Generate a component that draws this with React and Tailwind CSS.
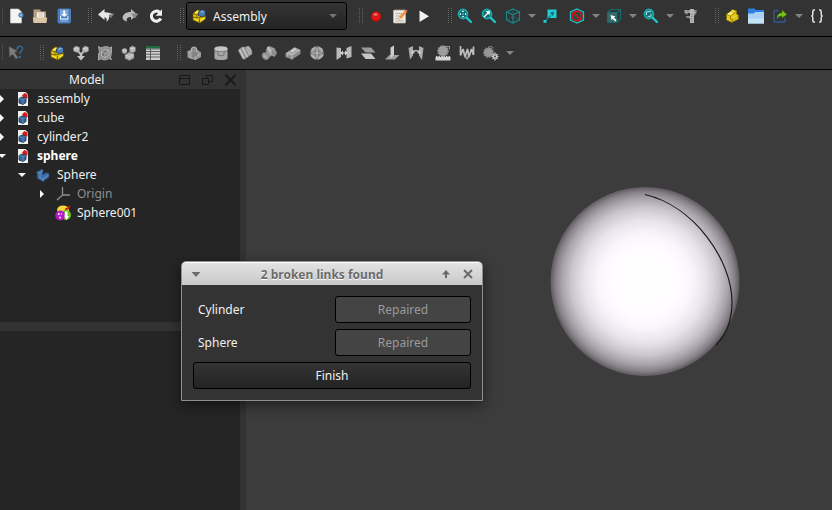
import React from "react";

function Icon({ children, className = "size-4" }) {
  return (
    <svg viewBox="0 0 16 16" className={`${className} shrink-0`} fill="none" aria-hidden="true">
      {children}
    </svg>
  );
}

/* ---------- file and edit icons ---------- */

const NewFile = () => (
  <Icon>
    <path d="M2.500 1h8l3 3v11h-11z" fill="#f4f4f2" stroke="#d8d8d4" strokeWidth=".6" />
    <circle cx="13" cy="7" r="2.600" fill="#4d7fb8" />
    <circle cx="13" cy="7" r="1.100" fill="#a8c6e4" />
  </Icon>
);
const OpenFile = () => (
  <Icon>
    <path d="M1.500 1.500h7v2h5.500v10h-12.500z" fill="#b89f7d" />
    <path d="M4.500 4h8v7h-8z" fill="#f5f2ec" stroke="#9c8869" strokeWidth=".5" />
    <path d="M6.500 6h4.500M6.500 8h4.500" stroke="#b9b0a2" strokeWidth=".8" />
    <path d="M.8 9.500h14.400l-.7 5.500h-13z" fill="#dac6a6" />
  </Icon>
);
const SaveFile = () => (
  <Icon>
    <rect x="2" y="1" width="12.500" height="14" rx="1" fill="#3f78c0" stroke="#5b8cca" strokeWidth=".8" />
    <path d="M4 1.500h8.500v7H4z" fill="#7ba5d8" />
    <path d="M7.200 2.500h2v3.500h2L8.200 9 5.200 6h2z" fill="#fff" />
    <path d="M4 10h8.500v4H4z" fill="#6f9cd2" />
    <path d="M4.500 8v3h7.500V8" stroke="#e9f1fa" strokeWidth="1" />
  </Icon>
);
const Undo = () => (
  <Icon>
    <path d="M9 5.500h7.500l-3.700 5z" fill="#77736f" />
    <path d="M0 6.500 6.500 1v3.200c4.500 0 7 1 8 2.300H11c.6 2.500.2 5-2.500 7.500.8-2.700 0-4.500-2-4.700V12z" fill="#e6e6e6" />
  </Icon>
);
const Redo = () => (
  <Icon>
    <path d="M15 6.500 9 1v3C4 4 1 6 .5 10c.6 1.700 2 3 4.500 3.500C4 10.500 5.500 9 9 9v3z" fill="#bdbdbd" />
    <path d="M9 5.500h7.500l-3.700 5z" fill="#8b8783" />
  </Icon>
);
const Reload = () => (
  <Icon>
    <path d="M12.800 10.500A5 5 0 1 1 11.500 4.200" stroke="#f0f0f0" strokeWidth="3" />
    <path d="M14 1.200v6.600H7.500z" fill="#f0f0f0" />
  </Icon>
);
const AssemblyPart = () => (
  <Icon>
    <path d="M2 5.500 6 2l4 .5v4l4.500 1v3.500L9 15l-7-3z" fill="#e3c414" stroke="#6b5b04" strokeWidth=".8" />
    <path d="M2 5.500 6 7l4-4M6 7v3l8-2M6 10l-4-1M8.500 14.500V10.500" stroke="#6b5b04" strokeWidth=".9" />
    <path d="m3.500 4.700 2.800-2 2 .4-2.500 2.300z" fill="#fbe95a" />
    <path d="M3 10.500 7 12v1.500l-4-2zM9.500 12l4-2.500v1.200l-4 2.500z" fill="#f7e23c" />
    <path d="m7.500 4 3.500-2.500L14.500 3v4.500L11 9 7.500 7.500z" fill="#4a7ab2" stroke="#1d3556" strokeWidth=".8" />
    <path d="M8.700 4.200 11.200 2.600 13.500 3.500 11 5z" fill="#7ea7d6" />
  </Icon>
);
const Record = () => (
  <Icon>
    <circle cx="8" cy="8.500" r="5" fill="#dc1515" stroke="#8a0d0d" strokeWidth=".6" />
    <ellipse cx="7.500" cy="6.500" rx="2.200" ry="1.300" fill="#f47474" />
  </Icon>
);
const MacroEdit = () => (
  <Icon>
    <rect x="1.500" y="2" width="12" height="13" rx=".8" fill="#ece9e2" stroke="#bcb8af" strokeWidth=".8" />
    <path d="M2 1.500h11.500" stroke="#57534e" strokeWidth="1.600" strokeDasharray="1 1" />
    <path d="M3.500 5.500h7M3.500 8h5M3.500 10.500h4M3.500 12.800h8" stroke="#aaa69d" strokeWidth=".8" />
    <path d="m7 9 6-6.500 2 1.500-5.700 6.500-2.800 1.500z" fill="#f0923c" />
    <path d="m13 2.500 1-1 1.700 1.300-.7 1.200z" fill="#e45d5d" />
    <path d="m7 9-.5 3L9.300 10.700z" fill="#f1d6a8" />
  </Icon>
);
const Play = () => (
  <Icon>
    <path d="m3.500 2.500 9.500 5.700-9.500 5.800z" fill="#f2f2f2" />
  </Icon>
);

/* ---------- view icons ---------- */

const Magnifier = ({ children }) => (
  <Icon>
    <circle cx="6" cy="6" r="4.500" fill="#11686b" stroke="#1aa7ab" strokeWidth="1.800" />
    <path d="m9.800 9.800 4.200 4.200" stroke="#1fc4c8" strokeWidth="2.400" strokeLinecap="round" />
    {children}
  </Icon>
);
const FitAll = () => (
  <Magnifier>
    <path d="M6 2.500 7.300 4H4.700zM6 9.500 7.300 8H4.700zM2.500 6 4 4.700v2.600zM9.500 6 8 4.700v2.600z" fill="#fff" />
    <circle cx="6" cy="6" r=".7" fill="#bfeeee" />
  </Magnifier>
);
const FitSelection = () => (
  <Magnifier>
    <path d="m3 9 4-4" stroke="#fff" strokeWidth="1.200" />
    <path d="M4.700 3.200 9 2.800l-.4 4.500z" fill="#fff" />
  </Magnifier>
);
const ZoomDraw = () => (
  <Magnifier>
    <path d="M3.500 7V4l4.500-.5M4.500 8.300H8V5.500" stroke="#a9ecec" strokeWidth="1" />
  </Magnifier>
);
const WireCube = () => (
  <Icon>
    <path d="m8 1 6.500 2.800v8L8 15l-6.500-3.200v-8zM1.500 3.800 8 6.800l6.500-3M8 6.800V15" stroke="#15888b" strokeWidth="1.200" />
    <path d="M8 1v7M1.500 11.800 8 8.500l6.500 3.300" stroke="#15888b" strokeWidth=".8" strokeDasharray="1.500 1" />
  </Icon>
);
const GoLinked = () => (
  <Icon>
    <path d="M5.500 1.500h9v8.500H5.500z" fill="#20cdd2" />
    <path d="m3 13 6-5.500" stroke="#0f7f82" strokeWidth="1.200" />
    <path d="M8 4.700 12 3.800 11 8z" fill="#0b6467" />
    <path d="M1.500 12h3v2.800h-3z" fill="#20cdd2" />
  </Icon>
);
const NoDraw = () => (
  <Icon>
    <path d="m8 1 6.500 3v8L8 15l-6.500-3V4z" fill="#0c5457" stroke="#1ec3c8" strokeWidth="1.300" />
    <circle cx="8" cy="8" r="4.800" stroke="#d01414" strokeWidth="1.900" />
    <path d="m4.700 4.700 6.600 6.600" stroke="#d01414" strokeWidth="2" />
  </Icon>
);
const SelectCube = () => (
  <Icon>
    <path d="M1.500 4.500h9.500v10H1.500z" fill="#35696a" />
    <path d="M1.500 4.500 5 1.500h9.500v9.500L11 14.500H1.500zM1.500 4.500H11v10M11 4.500l3.500-3" stroke="#156b6d" strokeWidth="1.200" />
    <path d="m4.500 7 5 1.600-1.600 1 2.600 2.600-1.200 1.200-2.700-2.700-1 1.500z" fill="#fff" />
  </Icon>
);
const Caliper = () => (
  <Icon>
    <path d="M1.500 2h12v3h-12z" fill="#a2a5a1" />
    <path d="M7 1h4v14H7z" fill="#b3b6b1" />
    <path d="M1.500 5h3v2zM3 8h4v2.500L3 9.500zM11 5h2.500l-2.500 3z" fill="#8d918c" />
    <path d="M9 6v8" stroke="#666" strokeWidth=".8" strokeDasharray="1 1" />
    <path d="M5 2v2M12 2v2" stroke="#666966" strokeWidth=".8" />
  </Icon>
);
const YellowPart = () => (
  <Icon>
    <path d="M2.500 6 6 4l2-2.500 4.500 1.300V6l2 1.500V11L8 14.500 2.500 12z" fill="#e7c914" stroke="#82700a" strokeWidth=".7" />
    <path d="m2.500 6 4 2v3l2 1v2M6.500 8l6-4.500M8.500 11.500 14 8" stroke="#8a760b" strokeWidth=".9" />
    <path d="m3.800 6 3-2 2 1L6.300 7zM8 2.500l3.300 1M9 10.500l4-2.500" stroke="#fff27a" strokeWidth=".8" fill="#fff27a" />
  </Icon>
);
const BlueFolder = () => (
  <Icon>
    <path d="M0 .5h6.500L8 2h8v13H0z" fill="#2d7fe0" />
    <path d="M0 5.500h5.500L7.500 4H16v11.500H0z" fill="#a9d1f3" />
    <path d="M0 10.500h16v5H0z" fill="#c3e2f3" />
  </Icon>
);
const Export = () => (
  <Icon>
    <path d="M6.500 2.500H3a1 1 0 0 0-1 1V13a1 1 0 0 0 1 1h9a1 1 0 0 0 1-1v-3" stroke="#2f5b92" strokeWidth="1.400" />
    <path d="M5 11c0-4 1.500-6 5-6.200V2l5 4.500-5 3.500V8C7.500 8 6 9 5 11z" fill="#78bf1f" stroke="#3b6d09" strokeWidth=".6" />
  </Icon>
);
const Braces = () => (
  <Icon>
    <path d="M6 2H5Q3.800 2 3.800 3.500v2.700Q3.800 8 2.300 8q1.500 0 1.500 1.800v2.700Q3.800 14 5 14h1M10 2h1q1.200 0 1.200 1.500v2.700Q12.200 8 13.700 8q-1.500 0-1.500 1.800v2.700Q12.200 14 11 14h-1" stroke="#e2e2e2" strokeWidth="1.500" />
  </Icon>
);

/* ---------- assembly icons ---------- */

const WhatsThis = () => (
  <Icon>
    <path d="m1 1.500 8.500 4.500-3 1.500 3.500 5-2 1.500-3.500-5L1.500 12z" fill="#7c7d7b" stroke="#555" strokeWidth=".5" />
    <path d="M9 4.500c.2-4.500 6-4 5.500-.5-.3 2.200-2.800 2.600-2.800 5.300" stroke="#35699a" strokeWidth="1.600" />
    <circle cx="11.700" cy="12" r="1.300" fill="#35699a" />
  </Icon>
);
const InsertParts = () => (
  <Icon>
    <path d="m.5 3 2.500-2L6.500 2.500v3.300L4 7.500.5 6zM9.500 3 12.500 1l3 1.500v3.500L13 7.500 9.500 6z" fill="#bcbcbc" stroke="#8a8a8a" strokeWidth=".5" />
    <path d="m4.500 5.500 3.500 4 3.500-4" stroke="#b5b5b5" strokeWidth="2" />
    <path d="M6.800 8h2.400v3H12L8 15.500 4 11h2.800z" fill="#c4c4c4" />
    <path d="m1 3 3 1.300L6 2.700M10 3l3 1.300 2-1.600" stroke="#dedede" strokeWidth=".7" />
  </Icon>
);
const Solve = () => (
  <Icon>
    <path d="M1.500 1.500 4 3c3-2 7-1.500 9 0l1.500-1.200V7l-1 5.500 1 2-2.500-1c-3 1.800-6 1.800-8 .2L1.500 15V9l1-2z" fill="#8e8e8e" stroke="#a9a9a9" strokeWidth="1" />
    <path d="m4.500 6.500 3-2 4.500 1.500v4l-4 2.500-3.500-1.500z" fill="#777" stroke="#c2c2c2" strokeWidth=".8" />
    <path d="m4.500 6.500 3.500 2 4-2.500M8 8.500v4M10 8v2.500" stroke="#c2c2c2" strokeWidth=".7" />
  </Icon>
);
const Parts = () => (
  <Icon>
    <path d="m8.500 2.700 3-2 3 1.800v3.700L11.800 8 8.500 6.500zM1 4.500l2.500-1.500L6 4.500v3L3.500 9 1 7.500zM4 10l4.500-3 4.500 2v4l-4.500 2.500L4 13.500z" fill="#b5b5b5" stroke="#777" strokeWidth=".5" />
    <path d="m4.800 10.300 3.700 1.500 3.800-2.300M9.200 3 11.800 4l2.200-1.300M1.500 4.900l2 1 2-1.200" stroke="#dadada" strokeWidth=".9" />
  </Icon>
);
const Bom = () => (
  <Icon>
    <path d="M1 1h14v14H1z" fill="#cfcfcf" />
    <path d="M1 1h14v2.500H1z" fill="#1e6b40" />
    <path d="M1 4h14M1 6.500h14M1 9.200h14M1 12h14M5.500 4v11" stroke="#444" strokeWidth=".8" />
  </Icon>
);
const Grounded = () => (
  <Icon>
    <path d="m1.500 6.500 3.500-2 3 1 3-1 4 3V12L9.500 15l-4-1-4-1.500z" fill="#9b9b9b" />
    <path d="M5.500 7V3.800a2.700 2.700 0 0 1 5 0V7" fill="#8c8c8c" stroke="#b0b0b0" strokeWidth="1.300" />
    <path d="M5 7h6.500v5.500H5z" fill="#858585" />
    <path d="m1.500 6.500 3.500 2v5M9.500 15v-3l5-3" stroke="#b9b9b9" strokeWidth=".8" />
  </Icon>
);
const FixedJoint = () => (
  <Icon>
    <path d="M1.500 3.500v10c2 2 11 2 13 0v-10z" fill="#a7a7a7" />
    <ellipse cx="8" cy="3.500" rx="6.500" ry="2.300" fill="#c6c6c6" />
    <path d="M1.500 6.500h3.500v3.500c2 1 4 1 6 0V6.500h3.500" stroke="#707070" strokeWidth="1" />
    <path d="M2.500 6.500h11" stroke="#808080" strokeWidth=".8" />
  </Icon>
);
const Revolute = () => (
  <Icon>
    <path d="M1 5.500 4 2.500l3.500-1 5 9.500-5 3.500-2-.5z" fill="#979797" />
    <path d="M2.500 4.500 7 13.500M5.500 2.500l5 9.500" stroke="#c9c9c9" strokeWidth="1.500" />
    <path d="M8 2.500c2-1.500 3-1.500 4-1 2 1.500 3.200 4.500 3 7.500L12 11z" fill="#b9b9b9" stroke="#7a7a7a" strokeWidth=".5" />
    <path d="m10 2.500 4 7" stroke="#8d8d8d" strokeWidth=".8" />
  </Icon>
);
const Cylindrical = () => (
  <Icon>
    <path d="m5 4.500 3-3.500 6 2.500-.5 4L9 12l-3.500-1z" fill="#a0a0a0" stroke="#707070" strokeWidth=".5" />
    <path d="M6.500 2 12 10" stroke="#cfcfcf" strokeWidth="1.400" />
    <path d="M1 9.500c1-2.500 4-2.500 6-.5s1.500 4.500-.5 5.500-6-1-5.500-5z" fill="#9a9a9a" stroke="#6a6a6a" strokeWidth=".5" />
    <path d="M10 5.500c2.500-1.500 5-.5 5.500 2.500l-2 3.500-3-1.500z" fill="#8d8d8d" stroke="#b0b0b0" strokeWidth=".6" />
    <path d="m3 10.500 2.500 2" stroke="#c8c8c8" strokeWidth="1" />
  </Icon>
);
const Slider = () => (
  <Icon>
    <path d="m.5 8.500 9-6 6 2.500v4L7 14.500.5 12z" fill="#8c8c8c" />
    <path d="m.5 8.500 9-6 6 2.500L7 11z" fill="#b4b4b4" />
    <path d="m4 6.500 5.500-4L13 4 7.500 8z" fill="#cacaca" stroke="#777" strokeWidth=".6" />
    <path d="M7 11v3.500M2.500 9.500v2" stroke="#c6c6c6" strokeWidth=".8" />
  </Icon>
);
const Ball = () => (
  <Icon>
    <circle cx="8" cy="8" r="6.800" fill="#b0b0b0" />
    <circle cx="8" cy="8" r="4" fill="#8f8f8f" />
    <path d="M8 1v14M1 8h14" stroke="#686868" strokeWidth="2.600" />
    <path d="M8 2.500v11M2.500 8h11" stroke="#cacaca" strokeWidth="1.200" />
  </Icon>
);
const Distance = () => (
  <Icon>
    <path d="m.5 2.500 4.500.5v9L.5 15zM10.500 3l5-2v11l-5 1.500z" fill="#b9b9b9" />
    <path d="M4 8h8" stroke="#cfcfcf" strokeWidth="1.200" />
    <path d="M7 5.500v5L4 8zM9 5.500v5L12 8z" fill="#cfcfcf" />
  </Icon>
);
const Parallel = () => (
  <Icon>
    <path d="M1 2.500h10l4.500 5H5.500z" fill="#9b9b9b" />
    <path d="M1 8.500h10l4.500 5.500H5.500z" fill="#c6c6c6" />
  </Icon>
);
const Perpendicular = () => (
  <Icon>
    <path d="m1 14.500 4.500-4.500H15.500L11 14.500z" fill="#9f9f9f" />
    <path d="M6.500 2.500 10 .5V10l-3.500 3.500z" fill="#cdcdcd" />
  </Icon>
);
const Angle = () => (
  <Icon>
    <path d="m.5 3 4.500-2v9.500l-3 4zM11 1l4.500 2-1.500 12-3-4.500z" fill="#acacac" />
    <path d="M3.500 7.500c2.500-2.500 6.500-2.500 9 0" stroke="#cfcfcf" strokeWidth="1.200" />
    <path d="m3 9 1-4 3 3zM13 9l-1-4-3 3z" fill="#cfcfcf" />
  </Icon>
);
const RackPinion = () => (
  <Icon>
    <circle cx="8" cy="6" r="5" fill="#9d9d9d" />
    <circle cx="8" cy="6" r="5.200" stroke="#919191" strokeWidth="1.400" strokeDasharray="1.400 1.200" />
    <path d="M10.500 1.500h4v3" stroke="#999" strokeWidth="1" />
    <path d="M.5 12h15v3.500H.5z" fill="#d4d4d4" />
    <path d="M1 11.500h14" stroke="#d4d4d4" strokeDasharray="1.500 1" />
  </Icon>
);
const Screw = () => (
  <Icon>
    <path d="M1.500 1v9.500L4 4l2 8 2.500-8 1.500 8 2.500-8 2 6V1.500" stroke="#bcbcbc" strokeWidth="1.700" strokeLinejoin="bevel" />
    <path d="M5 11.500h6L8 15z" fill="#999" />
  </Icon>
);
const Gears = () => (
  <Icon>
    <circle cx="5.500" cy="7.500" r="4.500" fill="#969696" />
    <circle cx="5.500" cy="7.500" r="4.800" stroke="#8c8c8c" strokeWidth="1.500" strokeDasharray="1.500 1.200" />
    <path d="M5 2.500c1-1.500 4-1.500 5.500.5" stroke="#888" />
    <path d="M12 7.500v8M8.500 11.500h7M9.500 9l5 5M14.500 9l-5 5" stroke="#cdcdcd" strokeWidth="1.300" />
    <circle cx="12" cy="11.500" r="1.100" fill="#555" />
  </Icon>
);

/* ---------- tree icons ---------- */

const DocIcon = () => (
  <Icon>
    <path d="M3 1h7.500L13 3.500V15H3z" fill="#f1f1ef" />
    <path d="M7 4.500 9.500 2l3 1.500V7L10 8.500z" fill="#d71a1a" />
    <path d="m4 7.500 3-1.500 4 1v4.500L8 13.500l-4-1.500z" fill="#356299" stroke="#17304f" strokeWidth=".8" />
    <path d="m4 7.500 4 1.300L11 7M8 9v4.500" stroke="#6f98ca" strokeWidth=".7" />
  </Icon>
);
const BodyIcon = () => (
  <Icon>
    <path d="m2 5 4.500-3 1.500 1v4.500l3-2 3 1v4L8 14.500l-6-3z" fill="#3d6da6" stroke="#1c385b" strokeWidth=".7" />
    <path d="m2 5 3 1.200L8 3.500M5 6.500V11l3 1.500v2M8 12l6-4.500" stroke="#6c97c8" strokeWidth=".9" />
  </Icon>
);
const OriginIcon = () => (
  <Icon>
    <path d="M7.500 1v8H15M7.500 9l-5.500 5" stroke="#8f8f8f" strokeWidth="1.300" />
  </Icon>
);
const SphereIcon = () => (
  <Icon>
    <ellipse cx="8" cy="5" rx="6" ry="4.500" fill="#f0d93c" />
    <path d="M10 4.500c2.500-.5 4-1.500 4.500-3.500" stroke="#d51717" strokeWidth="1.600" />
    <circle cx="11" cy="10" r="5" fill="#69c41b" />
    <circle cx="5.300" cy="10.500" r="5" fill="#b21cc4" />
    <circle cx="3.800" cy="9" r="1" fill="#fff" />
    <circle cx="6.500" cy="9" r=".8" fill="#f0c8f5" />
    <circle cx="5" cy="12.500" r=".9" fill="#fff" />
    <path d="M10 6.500h2.500v4.500H14l-2.500 4-2-3z" fill="#fff" />
  </Icon>
);

/* ---------- toolbars ---------- */

function Grip({ wide }) {
  return (
    <div className={`flex h-4 shrink-0 justify-end ${wide ? "w-[18px] pr-px" : "w-[17px]"}`} aria-hidden="true">
      <svg viewBox="0 0 6 16" className="h-4 w-1.5">
        <path d="M1.500 0v16M4.500 0v16" stroke="#626262" strokeDasharray="1 1" />
      </svg>
    </div>
  );
}

function EdgeGrip() {
  return (
    <svg viewBox="0 0 4 16" className="h-4 w-1 shrink-0" aria-hidden="true">
      <path d="M2.500 0v16" stroke="#5a5a5a" strokeDasharray="1 1" />
    </svg>
  );
}

function Tool({ label, icon: Glyph, className = "" }) {
  return (
    <button type="button" aria-label={label} className={`flex size-6 shrink-0 items-center justify-center ${className}`}>
      <Glyph />
    </button>
  );
}

function More({ label }) {
  return (
    <button type="button" aria-label={label} className="flex h-6 w-[13px] shrink-0 items-center justify-center">
      <svg viewBox="0 0 8 4" className="h-1 w-2" aria-hidden="true">
        <path d="M0 0h8L4 4z" fill="#848484" />
      </svg>
    </button>
  );
}

function MainToolbar() {
  return (
    <div role="toolbar" aria-label="Standard" className="flex h-[37px] shrink-0 items-center overflow-hidden border-b border-black bg-[#333] pb-1">
      <EdgeGrip />
      <Tool label="New" icon={NewFile} />
      <Tool label="Open" icon={OpenFile} />
      <Tool label="Save" icon={SaveFile} />
      <Grip wide />
      <Tool label="Undo" icon={Undo} />
      <Tool label="Redo" icon={Redo} />
      <Tool label="Refresh" icon={Reload} className="ml-0.5" />
      <Grip wide />
      <div className="grid h-7 w-[161px] shrink-0 items-center rounded-[3px] border border-black bg-linear-to-b from-[#343434] to-[#242424]">
        <select
          aria-label="Workbench"
          className="col-start-1 row-start-1 h-full w-full appearance-none bg-transparent pt-px pl-[26px] text-xs text-[#f0f0f0] outline-none"
        >
          <option>Assembly</option>
        </select>
        <span className="pointer-events-none col-start-1 row-start-1 flex items-center justify-between pr-[9px] pl-1">
          <AssemblyPart />
          <svg viewBox="0 0 8 4" className="h-1 w-2" aria-hidden="true">
            <path d="M0 0h8L4 4z" fill="#757575" />
          </svg>
        </span>
      </div>
      <Grip />
      <Tool label="Record macro" icon={Record} />
      <Tool label="Macros" icon={MacroEdit} />
      <Tool label="Execute macro" icon={Play} />
      <Grip />
      <Tool label="Fit all" icon={FitAll} />
      <Tool label="Fit selection" icon={FitSelection} />
      <Tool label="Isometric view" icon={WireCube} />
      <More label="More views" />
      <Tool label="Go to linked object" icon={GoLinked} />
      <Tool label="Draw style" icon={NoDraw} className="ml-[3px]" />
      <More label="More draw styles" />
      <Tool label="Select box" icon={SelectCube} />
      <More label="More selection tools" />
      <Tool label="Zoom" icon={ZoomDraw} />
      <More label="More zoom tools" />
      <Tool label="Measure" icon={Caliper} className="ml-[3px]" />
      <Grip />
      <Tool label="Create part" icon={YellowPart} />
      <Tool label="Create group" icon={BlueFolder} />
      <Tool label="Make link" icon={Export} />
      <More label="More link tools" />
      <Tool label="Variable set" icon={Braces} />
    </div>
  );
}

function AssemblyToolbar() {
  return (
    <div role="toolbar" aria-label="Assembly" className="flex h-[33px] shrink-0 items-center overflow-hidden border-b border-black bg-[#333]">
      <EdgeGrip />
      <Tool label="What's this?" icon={WhatsThis} />
      <Grip />
      <Tool label="Create assembly" icon={AssemblyPart} />
      <Tool label="Insert component" icon={InsertParts} />
      <Tool label="Solve assembly" icon={Solve} />
      <Tool label="Exploded view" icon={Parts} />
      <Tool label="Bill of materials" icon={Bom} />
      <Grip />
      <Tool label="Toggle grounded" icon={Grounded} />
      <Tool label="Fixed joint" icon={FixedJoint} className="ml-[3px]" />
      <Tool label="Revolute joint" icon={Revolute} />
      <Tool label="Cylindrical joint" icon={Cylindrical} />
      <Tool label="Slider joint" icon={Slider} />
      <Tool label="Ball joint" icon={Ball} />
      <Tool label="Distance joint" icon={Distance} className="ml-[3px]" />
      <Tool label="Parallel joint" icon={Parallel} />
      <Tool label="Perpendicular joint" icon={Perpendicular} />
      <Tool label="Angle joint" icon={Angle} />
      <Tool label="Rack and pinion joint" icon={RackPinion} className="ml-[3px]" />
      <Tool label="Screw joint" icon={Screw} />
      <Tool label="Gears joint" icon={Gears} />
      <More label="More joints" />
    </div>
  );
}

/* ---------- model tree ---------- */

const nodes = [
  { name: "assembly", level: 0, state: "closed", icon: DocIcon },
  { name: "cube", level: 0, state: "closed", icon: DocIcon },
  { name: "cylinder2", level: 0, state: "closed", icon: DocIcon },
  { name: "sphere", level: 0, state: "open", icon: DocIcon, tone: "font-bold text-white" },
  { name: "Sphere", level: 1, state: "open", icon: BodyIcon },
  { name: "Origin", level: 2, state: "closed", icon: OriginIcon, tone: "text-[#8f8f8f]" },
  { name: "Sphere001", level: 2, state: "leaf", icon: SphereIcon },
];

const indents = ["-ml-1.5", "ml-3.5", "ml-[34px]"];

function Toggle({ name, state }) {
  if (state === "leaf") return <span className="w-4 shrink-0" />;
  return (
    <button type="button" aria-label={`Toggle ${name}`} aria-expanded={state === "open"} className="flex size-4 shrink-0 items-center justify-center">
      <svg viewBox="0 0 8 8" className="size-2" fill="#f5f5f5" aria-hidden="true">
        <path d={state === "open" ? "M0 2h8L4 6z" : "M2 0v8l4-4z"} />
      </svg>
    </button>
  );
}

function ModelPanel() {
  return (
    <aside className="flex w-60 shrink-0 flex-col overflow-hidden bg-[#252525]">
      <header className="flex h-[19px] shrink-0 items-center bg-[#333] pr-px">
        <h2 className="flex-1 pl-[69px] text-xs text-[#f0f0f0]">Model</h2>
        <div className="flex gap-[7px] text-[#181818]">
          <button type="button" aria-label="Collapse panel">
            <Icon>
              <path d="M2.500 3.500h10v9h-10zM2.500 6.500h10" stroke="currentColor" />
            </Icon>
          </button>
          <button type="button" aria-label="Float panel">
            <Icon>
              <path d="M2.500 6.500h6v6h-6zM6.500 6V3.500h6v6H9" stroke="currentColor" />
            </Icon>
          </button>
          <button type="button" aria-label="Close panel">
            <Icon>
              <path d="m2.500 3 10 10M12.500 3l-10 10" stroke="currentColor" strokeWidth="1.800" />
            </Icon>
          </button>
        </div>
      </header>
      <ul className="h-[233px] shrink-0">
        {nodes.map(({ name, level, state, icon: Glyph, tone = "text-[#f0f0f0]" }) => (
          <li key={name} className={`flex h-[19px] items-center gap-[5px] text-xs ${indents[level]}`}>
            <Toggle name={name} state={state} />
            <Glyph />
            <span className={`pl-px ${tone}`}>{name}</span>
          </li>
        ))}
      </ul>
      <div role="separator" className="h-[9px] shrink-0 bg-[#333]" />
      <div className="flex-1" />
    </aside>
  );
}

/* ---------- 3D view ---------- */

function Viewport() {
  return (
    <main className="min-w-0 flex-1 bg-[#3c3c3c]">
      <svg viewBox="0 0 586 440" className="h-full w-full" role="img" aria-label="Sphere in the 3D view">
        <defs>
          <radialGradient id="shade">
            <stop offset="0" stopColor="#fff" />
            <stop offset=".35" stopColor="#fffdff" />
            <stop offset=".5" stopColor="#faf5fb" />
            <stop offset=".65" stopColor="#e8e2ea" />
            <stop offset=".78" stopColor="#cbc5cd" />
            <stop offset=".88" stopColor="#a8a3aa" />
            <stop offset=".95" stopColor="#857f86" />
            <stop offset="1" stopColor="#5e5a5f" />
          </radialGradient>
        </defs>
        <circle cx="399" cy="211.500" r="94.500" fill="url(#shade)" />
        <path d="M399 124.500C448 136 486 190 486 232C486 252 480 265 470 275" fill="none" stroke="#1b191b" strokeWidth="1.200" />
      </svg>
    </main>
  );
}

/* ---------- dialog ---------- */

const links = ["Cylinder", "Sphere"];

function LinksDialog() {
  return (
    <section
      role="dialog"
      aria-labelledby="dialog-title"
      className="absolute top-[261px] left-[181px] w-[302px] rounded-t-[5px] border border-[#8f8f8f] bg-[#333] shadow-[0_4px_14px_rgba(0,0,0,0.5)]"
    >
      <header className="flex h-[23px] items-center rounded-t-[4px] border-t border-white bg-linear-to-b from-[#e2e2e2] to-[#c9c9c9] px-1.5 text-[#6b6b6b]">
        <button type="button" aria-label="Window menu">
          <Icon>
            <path d="M3.500 6h9L8 11z" fill="currentColor" />
          </Icon>
        </button>
        <h1 id="dialog-title" className="flex-1 pt-px pl-0.5 text-center text-xs font-bold [text-shadow:0_1px_0_#fff]">
          2 broken links found
        </h1>
        <div className="flex gap-1.5">
          <button type="button" aria-label="Shade window">
            <Icon>
              <path d="M8 12V6" stroke="currentColor" strokeWidth="2" />
              <path d="M4 8.500 8 4l4 4.500z" fill="currentColor" />
            </Icon>
          </button>
          <button type="button" aria-label="Close">
            <Icon>
              <path d="m4 4 8 8M12 4l-8 8" stroke="currentColor" strokeWidth="2" />
            </Icon>
          </button>
        </div>
      </header>
      <div className="flex flex-col gap-1.5 p-[11px] text-xs text-[#f0f0f0]">
        {links.map((name) => (
          <div key={name} className="flex items-center justify-between pl-[5px]">
            <span id={`link-${name}`}>{name}</span>
            <button
              type="button"
              disabled
              aria-describedby={`link-${name}`}
              className="h-[27px] w-[136px] rounded-[3px] border border-black bg-[#444] text-[#9a9a9a]"
            >
              Repaired
            </button>
          </div>
        ))}
        <button type="button" className="h-[27px] rounded-[3px] border border-black bg-linear-to-b from-[#343434] to-[#232323]">
          Finish
        </button>
      </div>
    </section>
  );
}

export default function App() {
  return (
    <div className="relative flex h-screen flex-col overflow-hidden bg-[#333] font-['Noto_Sans',sans-serif]">
      <MainToolbar />
      <AssemblyToolbar />
      <div className="flex min-h-0 flex-1">
        <ModelPanel />
        <div role="separator" className="w-1.5 shrink-0 bg-[#333]" />
        <Viewport />
      </div>
      <LinksDialog />
    </div>
  );
}
